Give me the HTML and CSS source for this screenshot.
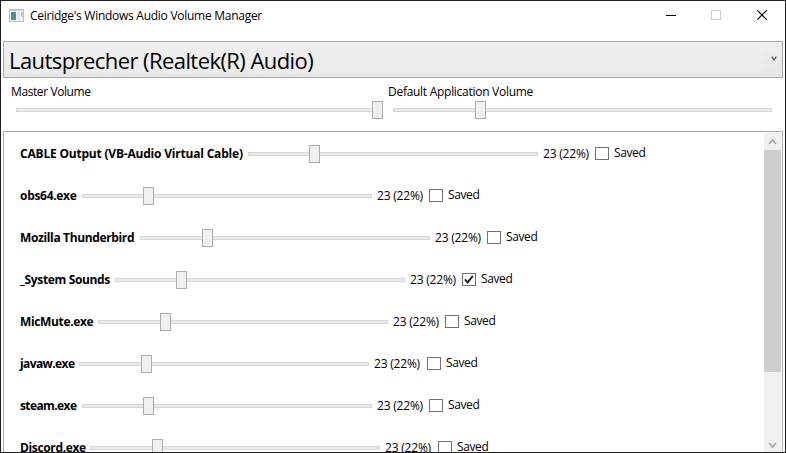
FILE: index.html
```
<!DOCTYPE html>
<html lang="en">
<head>
<meta charset="utf-8">
<title>Ceiridge's Windows Audio Volume Manager</title>
<link rel="stylesheet" href="styles.css">
</head>
<body>
<div class="window">
  <header class="titlebar">
    <svg class="app-icon" width="15" height="13" viewBox="0 0 15 13"><defs><linearGradient id="g" x2="0" y2="1"><stop stop-color="#4f8db4"/><stop offset="1" stop-color="#459b74"/></linearGradient></defs><rect x=".5" y=".5" width="14" height="12" fill="#f3f5f8" stroke="#b9bdc2"/><path d="M1 1.5h13" stroke="#cdd1d6"/><rect x="2" y="3" width="5" height="8" fill="url(#g)"/><rect x="8" y="3" width="3" height="8" fill="#e4e8ed"/><rect x="12" y="3" width="2" height="5" fill="#a9d3b4"/></svg>
    <h1 class="title">Ceiridge's Windows Audio Volume Manager</h1>
    <svg class="controls" width="104" height="11" viewBox="0 0 104 11" fill="none"><path d="M0 5.5h10" stroke="#000"/><rect x="45.5" y=".5" width="9" height="9" stroke="#ccc"/><path d="M91.3.3l9.4 9.4M100.7.3l-9.4 9.4" stroke="#000" stroke-width="1.1"/></svg>
  </header>
  <div class="combo">
    <div class="combo-text"><span>Lautsprecher (Realtek(R) Audio)</span></div>
    <svg width="6" height="6" viewBox="0 0 6 6" fill="none"><path d="M.7.6L3 4 5.300.6" stroke="#606060" stroke-width="1.4"/></svg>
  </div>
  <section class="globals">
    <div class="global master"><label>Master Volume</label><div class="slider"><i class="thumb"></i></div></div>
    <div class="global default"><label>Default Application Volume</label><div class="slider"><i class="thumb"></i></div></div>
  </section>
  <main class="list">
    <div class="rows">
      <div class="row cable"><b>CABLE Output (VB-Audio Virtual Cable)</b><div class="slider"><i class="thumb"></i></div><span class="value">23 (22%)</span><i class="check"></i><span class="saved">Saved</span></div>
      <div class="row obs"><b>obs64.exe</b><div class="slider"><i class="thumb"></i></div><span class="value">23 (22%)</span><i class="check"></i><span class="saved">Saved</span></div>
      <div class="row mozilla"><b>Mozilla Thunderbird</b><div class="slider"><i class="thumb"></i></div><span class="value">23 (22%)</span><i class="check"></i><span class="saved">Saved</span></div>
      <div class="row system"><b>_System Sounds</b><div class="slider"><i class="thumb"></i></div><span class="value">23 (22%)</span><i class="check"><svg width="12" height="11" viewBox="0 0 12 11"><path d="M2 5.400L4.700 8.400 9.800 1.800" fill="none" stroke="#212121" stroke-width="2"/></svg></i><span class="saved">Saved</span></div>
      <div class="row mic"><b>MicMute.exe</b><div class="slider"><i class="thumb"></i></div><span class="value">23 (22%)</span><i class="check"></i><span class="saved">Saved</span></div>
      <div class="row javaw"><b>javaw.exe</b><div class="slider"><i class="thumb"></i></div><span class="value">23 (22%)</span><i class="check"></i><span class="saved">Saved</span></div>
      <div class="row steam"><b>steam.exe</b><div class="slider"><i class="thumb"></i></div><span class="value">23 (22%)</span><i class="check"></i><span class="saved">Saved</span></div>
      <div class="row discord"><b>Discord.exe</b><div class="slider"><i class="thumb"></i></div><span class="value">23 (22%)</span><i class="check"></i><span class="saved">Saved</span></div>
    </div>
    <div class="scrollbar">
      <svg width="17" height="17" viewBox="0 0 17 17"><path d="M5 11l3.500-4 3.500 4" fill="none" stroke="#a3a3a3" stroke-width="1.500"/></svg>
      <div class="scroll-thumb"></div>
      <svg width="17" height="17" viewBox="0 0 17 17"><path d="M5 8l3.500 4L12 8" fill="none" stroke="#a3a3a3" stroke-width="1.500"/></svg>
    </div>
  </main>
</div>
</body>
</html>
```
FILE: styles.css
```
* { box-sizing: border-box; }
body { margin: 0; overflow: hidden; }
.window {
  width: 786px; height: 453px;
  display: flex; flex-direction: column;
  border: 1px solid #211f22;
  background: #fff; color: #000;
  font: 12px/16px "Open Sans", "Noto Sans", sans-serif;
  overflow: hidden; white-space: nowrap;
}
.titlebar { display: flex; height: 40px; flex: none; padding: 7px 15px 0 8px; }
.app-icon { margin-top: 1px; }
.title { margin: 0 0 0 6px; font-size: 12px; font-weight: 400; letter-spacing: -.27px; flex: 1; }
.controls { margin-top: 2px; }
.combo {
  display: flex; align-items: center; flex: none;
  height: 37px; width: 780px; margin-left: 2px;
  padding: 2px 5px 4px 2px;
  border: 1px solid #acacac;
  background: linear-gradient(#f0f0f0, #e5e5e5);
}
.combo-text {
  display: flex; align-items: center;
  width: 758px; height: 29px; margin-right: 8px; padding: 2px 0 0 3px;
  background: linear-gradient(#efefef, #ececec);
  font-size: 22px; line-height: 28px; letter-spacing: -.57px;
}
.globals { display: flex; flex: none; height: 53px; }
.global { padding: 6px 0 0 10px; width: 377px; }
.global.default { width: 400px; }
.global label { display: block; letter-spacing: -.28px; }
.global.master label { letter-spacing: -.4px; }
.global .slider { margin: 8px 0 0 5px; width: 367px; }
.global.default .slider { width: 379px; }
.slider { width: 290px; height: 4px; border: 1px solid #d6d6d6; background: #e7eaea; flex: none; }
.thumb { display: block; width: 11px; height: 18px; margin: -8px 0 0 60px; border: 1px solid #acacac; background: #f0f0f0; }
.master .thumb { margin-left: 355px; }
.default .thumb { margin-left: 81px; }
.list {
  display: flex; justify-content: space-between; flex: none;
  width: 780px; height: 330px; margin-left: 2px;
  border: 1px solid #acacac; padding: 1px 1px 0 16px;
}
.rows { display: flex; flex-direction: column; }
.row { display: flex; align-items: center; height: 42px; flex: none; }
.row b { width: 62px; flex: none; letter-spacing: -.36px; }
.value { width: 52px; padding-left: 5px; flex: none; letter-spacing: -.2px; }
.check { width: 14px; height: 13px; margin: -2px 0 0 5px; border: 1px solid #707070; flex: none; background: #fff; }
.check svg { display: block; }
.saved { margin: -2px 0 0 5px; letter-spacing: -.38px; }
.row.cable b { width: 228px; letter-spacing: -.2px; }
.row.mozilla b { width: 120px; }
.row.mozilla .thumb, .row.mic .thumb, .row.javaw .thumb, .row.discord .thumb { margin-left: 61px; }
.row.system b { width: 95px; }
.row.mic b { width: 78px; }
.row.obs b { letter-spacing: -.3px; }
.row.javaw b { width: 59px; letter-spacing: -.6px; }
.row.steam b { letter-spacing: -.6px; }
.row.discord b { width: 70px; }
.row.javaw .check, .row.discord .check { margin-left: 6px; }
.scrollbar { display: flex; flex-direction: column; justify-content: space-between; width: 17px; height: 319px; background: #f0f0f0; }
.scrollbar svg { flex: none; }
.scroll-thumb { height: 222px; margin-bottom: auto; background: #cdcdcd; }
```
